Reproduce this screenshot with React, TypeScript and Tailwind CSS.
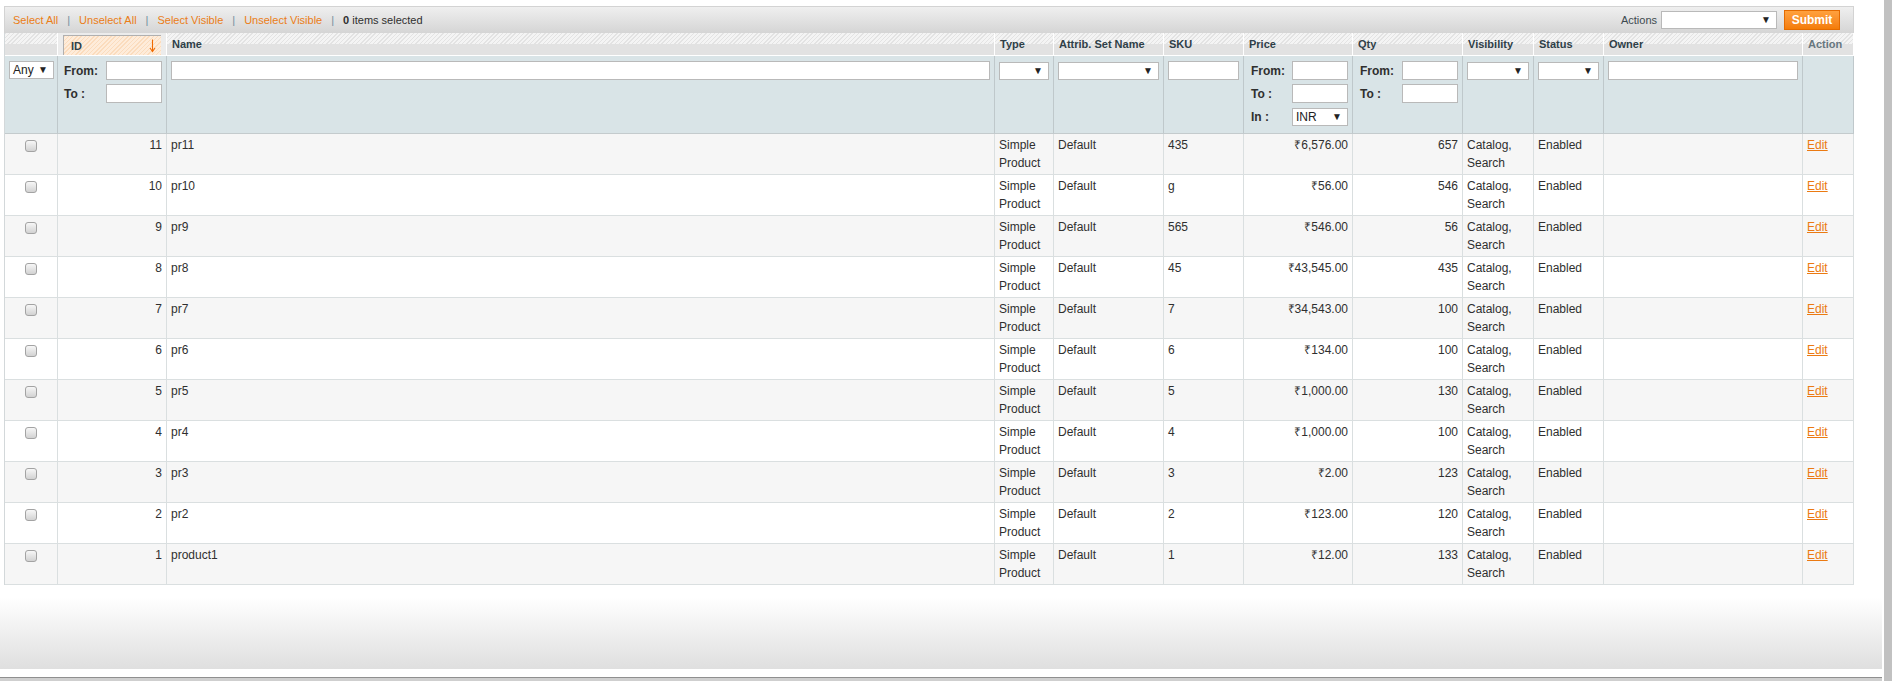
import React from 'react'

type Product = {
    id: number
    name: string
    sku: string
    price: string
    qty: number
}

const products: Product[] = [
    { id: 11, name: 'pr11', sku: '435', price: '₹6,576.00', qty: 657 },
    { id: 10, name: 'pr10', sku: 'g', price: '₹56.00', qty: 546 },
    { id: 9, name: 'pr9', sku: '565', price: '₹546.00', qty: 56 },
    { id: 8, name: 'pr8', sku: '45', price: '₹43,545.00', qty: 435 },
    { id: 7, name: 'pr7', sku: '7', price: '₹34,543.00', qty: 100 },
    { id: 6, name: 'pr6', sku: '6', price: '₹134.00', qty: 100 },
    { id: 5, name: 'pr5', sku: '5', price: '₹1,000.00', qty: 130 },
    { id: 4, name: 'pr4', sku: '4', price: '₹1,000.00', qty: 100 },
    { id: 3, name: 'pr3', sku: '3', price: '₹2.00', qty: 123 },
    { id: 2, name: 'pr2', sku: '2', price: '₹123.00', qty: 120 },
    { id: 1, name: 'product1', sku: '1', price: '₹12.00', qty: 133 },
]

// hatched heading background, darker band on the lower half
const hatch =
    'bg-[linear-gradient(to_bottom,transparent_52%,#e2e2e2_52%),repeating-linear-gradient(135deg,#e3e3e3_0px,#e3e3e3_1px,#f4f4f4_1px,#f4f4f4_3px)]'

const headCell = `h-[23px] border-r border-b border-r-white border-b-white px-[5px] text-left align-middle text-[11px] font-bold text-[#2f3f48] ${hatch}`
const filterCell = 'h-[78px] border-r border-b border-r-[#bfc8cb] border-b-[#c4cbcd] px-[4px] pt-[5px] align-top text-left font-normal'
const bodyCell = 'border-r border-b border-[#dadfe0] px-[4px] pt-[2px] pb-[2px] align-top'

function Box({ className = '' }: { className?: string }) {
    return <div className={`h-[19px] border border-[#b9b9b9] bg-white ${className}`} />
}

function FakeSelect({ value = '', className = '' }: { value?: string; className?: string }) {
    return (
        <div className={`flex h-[18px] items-center justify-between border border-[#b9b9b9] bg-white pl-[3px] pr-[5px] text-[12px] text-[#222] ${className}`}>
            <span>{value}</span>
            <span className="text-[10px] leading-none">▼</span>
        </div>
    )
}

function RangeRow({ label, children }: { label: string; children: React.ReactNode }) {
    return (
        <div className="flex h-[19px] items-center justify-between">
            <span className="text-[12px] font-bold text-[#2f2f2f]">{label}</span>
            {children}
        </div>
    )
}

function Check() {
    return <span className="inline-block h-[12px] w-[12px] rounded-[3px] border border-[#a3a3a3] bg-linear-to-b from-[#f7f7f7] to-[#d2d2d2] align-middle" />
}

function SortArrow() {
    return (
        <svg width="9" height="14" viewBox="0 0 9 14" className="shrink-0">
            <line x1="4.5" y1="0.5" x2="4.5" y2="12" stroke="#f06a00" strokeWidth="1.1" />
            <polyline points="2,9 4.5,12.5 7,9" fill="none" stroke="#f06a00" strokeWidth="1.1" />
        </svg>
    )
}

function MassactionBar() {
    const sep = <span className="mx-[9px] text-[#6e8f9e]">|</span>
    return (
        <div className="flex h-[27px] items-center justify-between border border-b-0 border-[#d3d3d3] bg-linear-to-b from-[#efefef] to-[#d5d5d5] pl-[8px] pr-[13px] text-[11px]">
            <div className="flex items-center">
                <span className="text-[#eb7d16]">Select All</span>
                {sep}
                <span className="text-[#eb7d16]">Unselect All</span>
                {sep}
                <span className="text-[#eb7d16]">Select Visible</span>
                {sep}
                <span className="text-[#eb7d16]">Unselect Visible</span>
                {sep}
                <span className="text-[#2f2f2f]">
                    <strong>0</strong> items selected
                </span>
            </div>
            <div className="flex items-center">
                <span className="mr-[4px] text-[#3d4a50]">Actions</span>
                <FakeSelect className="w-[116px]" />
                <button
                    type="button"
                    className="ml-[7px] h-[20px] w-[56px] border border-[#e46b00] bg-linear-to-b from-[#ffa13d] to-[#f47c05] text-[12px] font-bold text-white"
                >
                    Submit
                </button>
            </div>
        </div>
    )
}

export default function App() {
    return (
        <div className="flex h-[681px] w-[1892px] bg-white font-['Liberation_Sans',Arial,sans-serif] text-[12px] leading-[18px] text-[#2f2f2f]">
            <div className="flex w-[1882px] flex-col">
                <div className="pl-[4px] pt-[6px]">
                    <div className="w-[1850px]">
                        <MassactionBar />
                        <table className="w-[1850px] table-fixed border-separate border-spacing-0 border-l border-[#d3d8da]">
                            <colgroup>
                                <col className="w-[53px]" />
                                <col className="w-[109px]" />
                                <col className="w-[828px]" />
                                <col className="w-[59px]" />
                                <col className="w-[110px]" />
                                <col className="w-[80px]" />
                                <col className="w-[109px]" />
                                <col className="w-[110px]" />
                                <col className="w-[71px]" />
                                <col className="w-[70px]" />
                                <col className="w-[199px]" />
                                <col className="w-[51px]" />
                            </colgroup>
                            <thead>
                                <tr>
                                    <th className={headCell}></th>
                                    <th className="h-[23px] border-r border-b border-r-white border-b-white bg-[#ececec] px-[5px] pt-[2px] align-middle">
                                        <div className="flex h-[20px] items-center justify-between border-t border-l border-[#b0b0b0] bg-[repeating-linear-gradient(135deg,#fbdcbd_0px,#fbdcbd_1px,#feecda_1px,#feecda_3px)] pl-[7px] pr-[4px] text-left text-[11px] font-bold text-[#2f3f48]">
                                            <span>ID</span>
                                            <SortArrow />
                                        </div>
                                    </th>
                                    <th className={headCell}>Name</th>
                                    <th className={headCell}>Type</th>
                                    <th className={headCell}>Attrib. Set Name</th>
                                    <th className={headCell}>SKU</th>
                                    <th className={headCell}>Price</th>
                                    <th className={headCell}>Qty</th>
                                    <th className={headCell}>Visibility</th>
                                    <th className={headCell}>Status</th>
                                    <th className={headCell}>Owner</th>
                                    <th className={`${headCell} !text-[#67777f]`}>Action</th>
                                </tr>
                                <tr className="bg-[#d9e4e7]">
                                    <th className={filterCell}>
                                        <FakeSelect value="Any" className="w-[45px]" />
                                    </th>
                                    <th className={`${filterCell} !pl-[6px]`}>
                                        <div className="flex flex-col gap-[4px]">
                                            <RangeRow label="From:">
                                                <Box className="w-[56px]" />
                                            </RangeRow>
                                            <RangeRow label="To :">
                                                <Box className="w-[56px]" />
                                            </RangeRow>
                                        </div>
                                    </th>
                                    <th className={filterCell}>
                                        <Box className="w-full" />
                                    </th>
                                    <th className={filterCell}>
                                        <FakeSelect className="mt-[1px] w-full" />
                                    </th>
                                    <th className={filterCell}>
                                        <FakeSelect className="mt-[1px] w-full" />
                                    </th>
                                    <th className={filterCell}>
                                        <Box className="w-full" />
                                    </th>
                                    <th className={`${filterCell} !pl-[7px]`}>
                                        <div className="flex flex-col gap-[4px]">
                                            <RangeRow label="From:">
                                                <Box className="w-[56px]" />
                                            </RangeRow>
                                            <RangeRow label="To :">
                                                <Box className="w-[56px]" />
                                            </RangeRow>
                                            <RangeRow label="In :">
                                                <FakeSelect value="INR" className="w-[56px]" />
                                            </RangeRow>
                                        </div>
                                    </th>
                                    <th className={`${filterCell} !pl-[7px]`}>
                                        <div className="flex flex-col gap-[4px]">
                                            <RangeRow label="From:">
                                                <Box className="w-[56px]" />
                                            </RangeRow>
                                            <RangeRow label="To :">
                                                <Box className="w-[56px]" />
                                            </RangeRow>
                                        </div>
                                    </th>
                                    <th className={filterCell}>
                                        <FakeSelect className="mt-[1px] w-full" />
                                    </th>
                                    <th className={filterCell}>
                                        <FakeSelect className="mt-[1px] w-full" />
                                    </th>
                                    <th className={filterCell}>
                                        <Box className="w-full" />
                                    </th>
                                    <th className={filterCell}></th>
                                </tr>
                            </thead>
                            <tbody>
                                {products.map((p, i) => (
                                    <tr key={p.id} className={i % 2 === 0 ? 'bg-[#f6f6f6]' : 'bg-white'}>
                                        <td className={`${bodyCell} text-center`}>
                                            <Check />
                                        </td>
                                        <td className={`${bodyCell} text-right`}>{p.id}</td>
                                        <td className={bodyCell}>{p.name}</td>
                                        <td className={bodyCell}>Simple Product</td>
                                        <td className={bodyCell}>Default</td>
                                        <td className={bodyCell}>{p.sku}</td>
                                        <td className={`${bodyCell} text-right`}>{p.price}</td>
                                        <td className={`${bodyCell} text-right`}>{p.qty}</td>
                                        <td className={bodyCell}>Catalog, Search</td>
                                        <td className={bodyCell}>Enabled</td>
                                        <td className={bodyCell}></td>
                                        <td className={bodyCell}>
                                            <span className="text-[#eb7a12] underline">Edit</span>
                                        </td>
                                    </tr>
                                ))}
                            </tbody>
                        </table>
                    </div>
                </div>
                <div className="flex-1 bg-linear-to-b from-white from-15% to-[#dfdfdf]" />
                <div className="h-[8px]" />
                <div className="h-[1px] bg-[#8f8f8f]" />
                <div className="h-[3px] bg-[#cfcfcf]" />
            </div>
            <div className="ml-[2px] w-[8px] bg-[#c1c1c1]" />
        </div>
    )
}
